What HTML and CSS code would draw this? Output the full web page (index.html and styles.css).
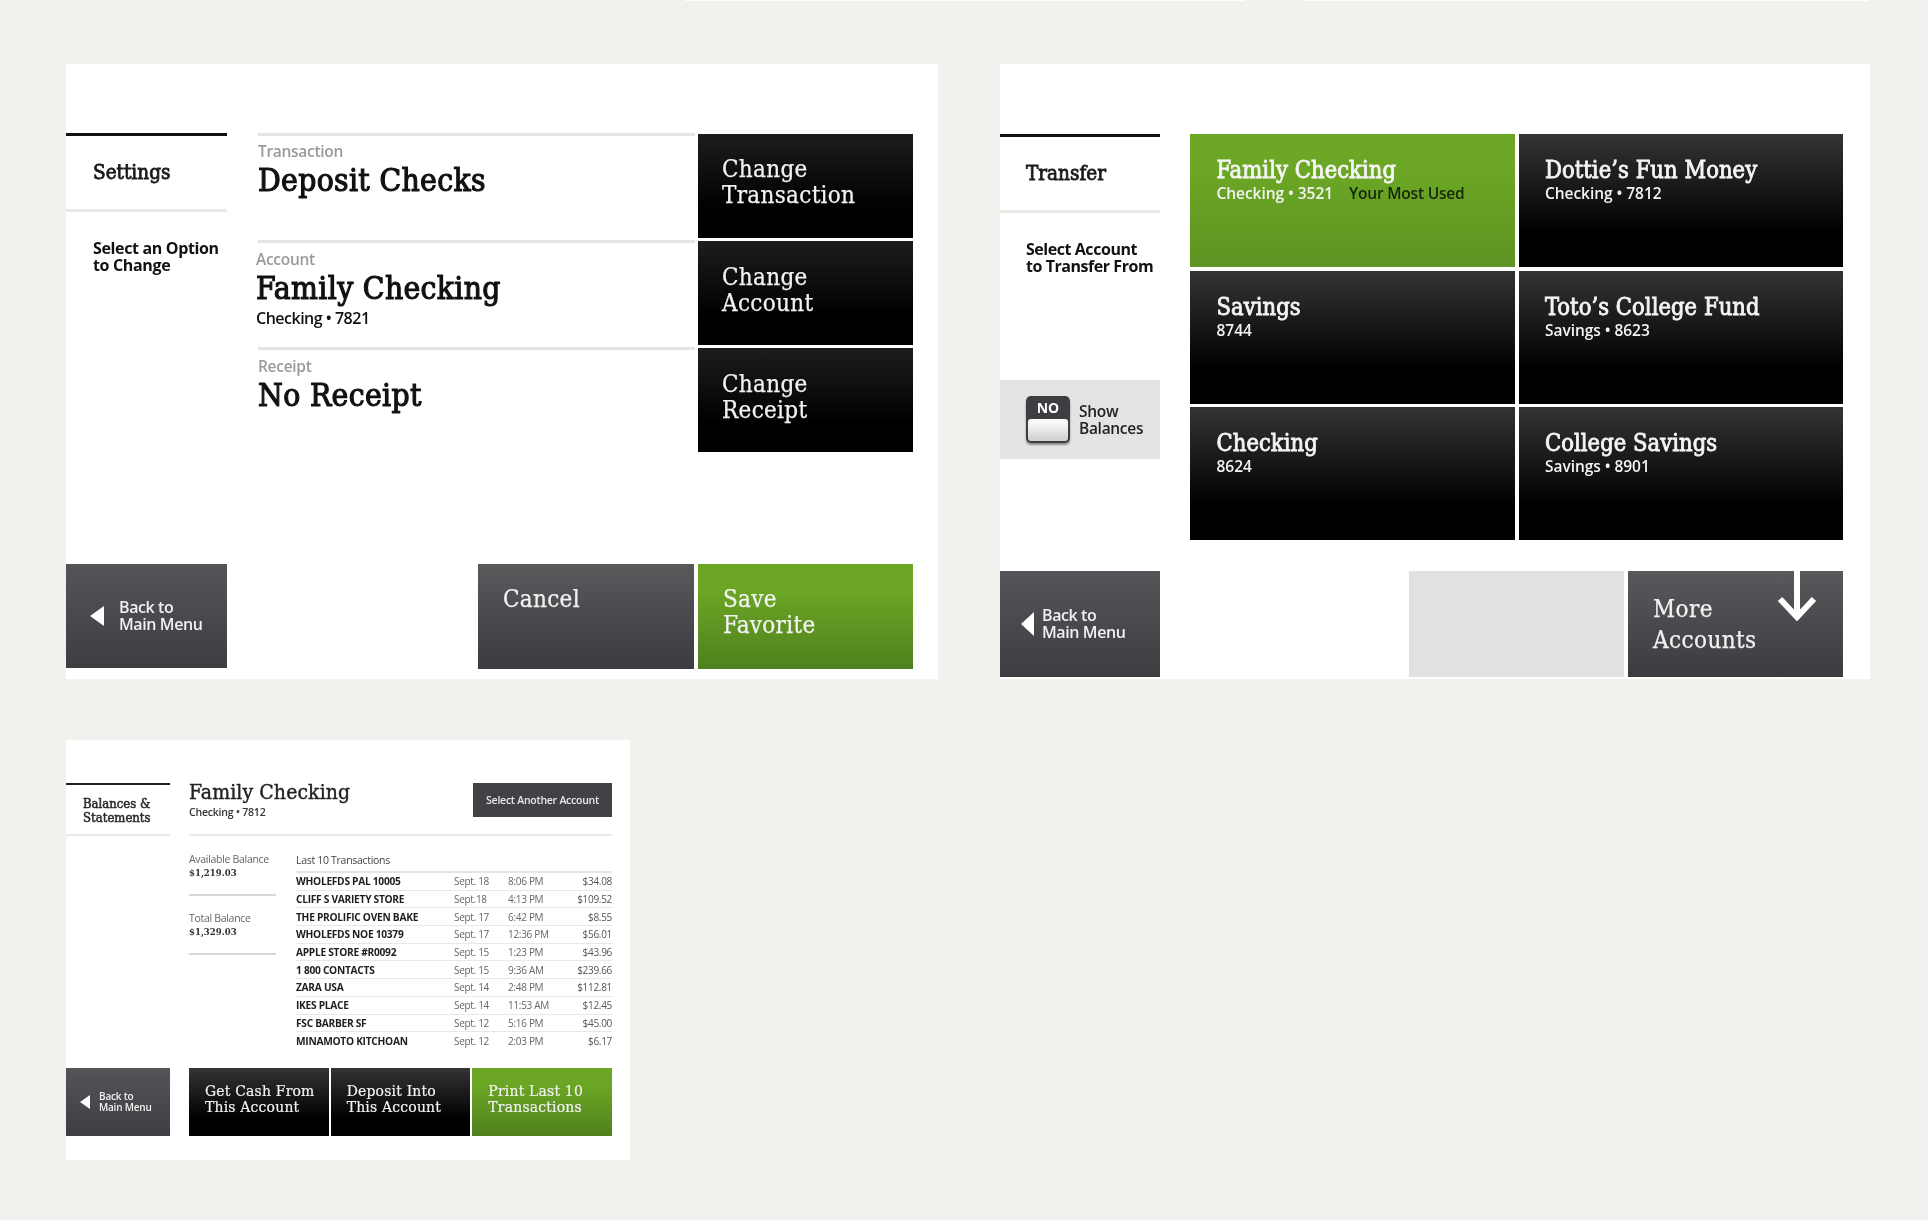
FILE: index.html
```html
<!DOCTYPE html>
<html lang="en">
<head>
<meta charset="utf-8">
<title>ATM screens</title>
<link rel="stylesheet" href="styles.css">
</head>
<body>
<div class="strips"><span class="strip strip-a"></span><span class="strip strip-b"></span></div>
<main class="gallery">
  <section class="panel panel-settings">
    <aside class="side">
      <h2 class="side-title">Settings</h2>
      <p class="side-help">Select an Option<br>to Change</p>
    </aside>
    <div class="summary">
      <div class="summary-row">
        <div class="info"><div class="info-label">Transaction</div><div class="info-value">Deposit Checks</div></div>
        <div class="btn btn-black btn-large">Change<br>Transaction</div>
      </div>
      <div class="summary-row">
        <div class="info info-shift"><div class="info-label">Account</div><div class="info-value">Family Checking</div><div class="info-sub">Checking • 7821</div></div>
        <div class="btn btn-black btn-large">Change<br>Account</div>
      </div>
      <div class="summary-row">
        <div class="info"><div class="info-label">Receipt</div><div class="info-value">No Receipt</div></div>
        <div class="btn btn-black btn-large">Change<br>Receipt</div>
      </div>
    </div>
    <div class="back back-wide">
      <svg class="back-arrow" viewBox="0 0 14 20"><path d="M14 0V20L0 10Z"/></svg>
      <span>Back to<br>Main Menu</span>
    </div>
    <div class="footer-actions">
      <div class="btn btn-gray btn-large btn-cancel">Cancel</div>
      <div class="btn btn-green btn-large">Save<br>Favorite</div>
    </div>
  </section>

  <section class="panel panel-transfer">
    <aside class="side">
      <h2 class="side-title">Transfer</h2>
      <p class="side-help">Select Account<br>to Transfer From</p>
      <div class="toggle-box">
        <div class="toggle"><span class="toggle-no">NO</span><span class="toggle-knob"></span></div>
        <span class="toggle-text">Show<br>Balances</span>
      </div>
    </aside>
    <div class="accounts">
      <div class="account btn-green-flat"><div class="account-name">Family Checking</div><div class="account-sub">Checking • 3521 <b class="most-used">Your Most Used</b></div></div>
      <div class="account btn-dark"><div class="account-name">Dottie’s Fun Money</div><div class="account-sub">Checking • 7812</div></div>
      <div class="account btn-dark"><div class="account-name">Savings</div><div class="account-sub">8744</div></div>
      <div class="account btn-dark"><div class="account-name">Toto’s College Fund</div><div class="account-sub">Savings • 8623</div></div>
      <div class="account btn-dark"><div class="account-name">Checking</div><div class="account-sub">8624</div></div>
      <div class="account btn-dark"><div class="account-name">College Savings</div><div class="account-sub">Savings • 8901</div></div>
    </div>
    <div class="back back-tight">
      <svg class="back-arrow" viewBox="0 0 14 26"><path d="M14 0V26L0 13Z"/></svg>
      <span>Back to<br>Main Menu</span>
    </div>
    <div class="footer-actions footer-more">
      <div class="blank"></div>
      <div class="btn btn-gray btn-more">More<br>Accounts
        <svg class="down-arrow" viewBox="0 0 40 50"><path d="M20 0V46M3 28 20 46 37 28" fill="none" stroke="#fff" stroke-width="6"/></svg>
      </div>
    </div>
  </section>

  <section class="panel panel-balances">
    <aside class="side side-small">
      <h2 class="side-title-small">Balances &amp;<br>Statements</h2>
    </aside>
    <div class="statement">
      <header class="statement-head">
        <div><div class="statement-name">Family Checking</div><div class="statement-sub">Checking • 7812</div></div>
        <div class="select-btn">Select Another Account</div>
      </header>
      <div class="statement-body">
        <div class="balances">
          <div class="balance"><span class="balance-label">Available Balance</span><b>$1,219.03</b></div>
          <div class="balance balance-total"><span class="balance-label">Total Balance</span><b>$1,329.03</b></div>
        </div>
        <div class="transactions">
          <div class="transactions-title">Last 10 Transactions</div>
          <div class="tx"><b>WHOLEFDS PAL 10005</b><span>Sept. 18</span><span>8:06 PM</span><span>$34.08</span></div>
          <div class="tx"><b>CLIFF S VARIETY STORE</b><span>Sept.18</span><span>4:13 PM</span><span>$109.52</span></div>
          <div class="tx"><b>THE PROLIFIC OVEN BAKE</b><span>Sept. 17</span><span>6:42 PM</span><span>$8.55</span></div>
          <div class="tx"><b>WHOLEFDS NOE 10379</b><span>Sept. 17</span><span>12:36 PM</span><span>$56.01</span></div>
          <div class="tx"><b>APPLE STORE #R0092</b><span>Sept. 15</span><span>1:23 PM</span><span>$43.96</span></div>
          <div class="tx"><b>1 800 CONTACTS</b><span>Sept. 15</span><span>9:36 AM</span><span>$239.66</span></div>
          <div class="tx"><b>ZARA USA</b><span>Sept. 14</span><span>2:48 PM</span><span>$112.81</span></div>
          <div class="tx"><b>IKES PLACE</b><span>Sept. 14</span><span>11:53 AM</span><span>$12.45</span></div>
          <div class="tx"><b>FSC BARBER SF</b><span>Sept. 12</span><span>5:16 PM</span><span>$45.00</span></div>
          <div class="tx"><b>MINAMOTO KITCHOAN</b><span>Sept. 12</span><span>2:03 PM</span><span>$6.17</span></div>
        </div>
      </div>
    </div>
    <div class="back back-small">
      <svg class="back-arrow-small" viewBox="0 0 10 14"><path d="M10 0V14L0 7Z"/></svg>
      <span>Back to<br>Main Menu</span>
    </div>
    <div class="small-actions">
      <div class="btn btn-dark btn-small">Get Cash From<br>This Account</div>
      <div class="btn btn-dark btn-small">Deposit Into<br>This Account</div>
      <div class="btn btn-green btn-small">Print Last 10<br>Transactions</div>
    </div>
  </section>
</main>
</body>
</html>
```

FILE: styles.css
```css
* { box-sizing: border-box; }
html, body { margin: 0; padding: 0; }
body {
  width: 1928px;
  height: 1220px;
  overflow: hidden;
  background: #f0f2ed;
  font-family: "Open Sans", "Liberation Sans", sans-serif;
  color: #111;
}
.strips { display: flex; height: 1px; padding-left: 685px; gap: 61px; }
.strip { display: block; height: 1px; background: #fff; }
.strip-a { width: 560px; }
.strip-b { width: 562px; }

.gallery {
  display: grid;
  grid-template-columns: 872px 870px;
  grid-template-rows: 615px 420px;
  column-gap: 62px;
  row-gap: 61px;
  padding: 63px 0 0 66px;
}
.panel { background: #fff; display: grid; filter: blur(.35px); }

.side { display: flex; flex-direction: column; }
.side-title {
  margin: 0;
  height: 79px;
  padding: 24px 0 0 27px;
  border-top: 3px solid #111;
  border-bottom: 3px solid #e9e9e7;
  font: 400 20.5px/24px "DejaVu Serif Condensed", "DejaVu Serif", serif;
  -webkit-text-stroke: .8px #1a1a1a;
  color: #1a1a1a;
}
.side-help {
  margin: 28px 0 0 27px;
  font-size: 16px;
  font-weight: 700;
  line-height: 17px;
  letter-spacing: -.35px;
  color: #111;
}

.btn { color: #f2f2f2; font-family: "DejaVu Serif Condensed", "DejaVu Serif", serif; }
.btn-black { background: linear-gradient(#1d1d1e, #000 72%); }
.btn-dark { background: linear-gradient(#343435, #000 75%); }
.btn-gray { background: linear-gradient(#58595b, #3b3c40); }
.btn-green { background: linear-gradient(#6ba624 25%, #4f801e); }
.btn-green-flat { background: linear-gradient(#6ba624 30%, #5d9322); }
.btn-large {
  font-size: 24px;
  line-height: 26px;
  padding: 22px 0 0 24px;
  letter-spacing: .3px;
  -webkit-text-stroke: .25px #f2f2f2;
}

.panel-settings {
  grid-template-columns: 161px 655px;
  grid-template-rows: 431px 105px;
  column-gap: 31px;
  padding-top: 69px;
}
.summary { display: flex; flex-direction: column; gap: 3px; padding-top: 1px; }
.summary-row { display: flex; gap: 3px; height: 104px; }
.summary-row .btn { width: 215px; flex: none; }
.summary-row + .summary-row .btn { padding-top: 23px; }
.info {
  flex: 1;
  margin-top: -1px;
  border-top: 3px solid #e4e4e3;
  padding-top: 6px;
}
.summary-row + .summary-row .info { padding-top: 7px; }
.info-shift > div { margin-left: -2px; }
.info-label { color: #9a9a9a; font-size: 15.5px; font-weight: 600; line-height: 18px; letter-spacing: -.3px; }
.info-value {
  font: 400 31.5px/38px "DejaVu Serif Condensed", "DejaVu Serif", serif;
  -webkit-text-stroke: 1.1px #111;
  color: #111;
  margin-top: 1px;
  letter-spacing: .35px;
}
.info-sub { font-size: 16px; font-weight: 600; line-height: 22px; letter-spacing: -.5px; }

.back { background: linear-gradient(#545558, #3d3e42); color: #f0f0f0; display: flex; align-items: center; }
.back-wide { font-size: 16px; line-height: 16.5px; gap: 15px; padding-left: 24px; font-weight: 600; letter-spacing: -.4px; height: 104px; }
.back-wide span { margin-top: -1px; }
.back-arrow { width: 14px; height: 20px; fill: #fff; flex: none; }
.footer-actions { display: flex; justify-content: flex-end; gap: 4px; }
.footer-actions .btn { width: 215px; padding-left: 25px; }
.footer-actions .btn-cancel { width: 216px; }
.panel-settings .footer-actions .btn { height: 105px; }

.panel-transfer {
  grid-template-columns: 160px 653px;
  grid-template-rows: 437px 106px;
  column-gap: 30px;
  padding-top: 70px;
}
.panel-transfer .side-title { padding-left: 26px; }
.panel-transfer .side-help { margin: 28px 0 0 26px; letter-spacing: -.45px; }
.toggle-box {
  margin-top: 105px;
  height: 79px;
  background: #e3e4e3;
  display: flex;
  align-items: center;
  gap: 9px;
  padding-left: 26px;
}
.toggle {
  width: 44px;
  height: 47px;
  border-radius: 5px;
  background: #3d3e42;
  box-shadow: 0 2px 2px #8a8a8a;
  display: flex;
  flex-direction: column;
  align-items: center;
  padding: 3px 2px 2px;
}
.toggle-no { color: #fff; font-size: 14px; font-weight: 700; line-height: 18px; }
.toggle-knob { width: 40px; flex: 1; margin-top: 2px; border-radius: 3px; background: linear-gradient(#fff, #cfcfcf); }
.toggle-text { font-size: 15.5px; line-height: 17px; font-weight: 600; letter-spacing: -.3px; color: #222; }

.accounts {
  display: grid;
  grid-template-columns: 325px 324.5px;
  grid-template-rows: repeat(3, 133px);
  column-gap: 3.5px;
  row-gap: 3.5px;
  align-content: start;
}
.account { padding: 22px 0 0 26.5px; color: #f4f4f4; }
.account-name {
  font: 400 23.5px/28px "DejaVu Serif Condensed", "DejaVu Serif", serif;
  -webkit-text-stroke: .8px #f4f4f4;
  letter-spacing: .05px;
}
.account-sub { font-size: 15.5px; font-weight: 600; line-height: 20px; letter-spacing: -.05px; margin-top: -1px; }
.most-used { color: #15260a; margin-left: 12px; font-weight: 600; letter-spacing: -.2px; }

.back-tight { font-size: 16px; line-height: 17px; gap: 8px; padding-left: 21px; font-weight: 600; letter-spacing: -.4px; height: 106px; }
.back-tight .back-arrow { width: 13px; height: 26px; }
.footer-more { gap: 4px; }
.blank { width: 215px; height: 106px; background: #e0e2e1; }
.btn-more {
  position: relative;
  height: 106px;
  font-size: 24px;
  line-height: 31px;
  padding: 23px 0 0 26px;
  letter-spacing: .4px;
  -webkit-text-stroke: .25px #f2f2f2;
}
.down-arrow { position: absolute; top: 0; right: 26px; width: 40px; height: 50px; }

.panel-balances {
  width: 564px;
  grid-template-columns: 104px 423px;
  grid-template-rows: 285px 68px;
  column-gap: 19px;
  padding-top: 43px;
  filter: blur(.5px);
}
.side-small { display: block; }
.side-title-small {
  margin: 0;
  height: 53px;
  padding: 12px 0 0 17px;
  border-top: 2px solid #222;
  border-bottom: 2px solid #eaeaea;
  font: 400 13px/14px "DejaVu Serif Condensed", "DejaVu Serif", serif;
  -webkit-text-stroke: .5px #2a2a2a;
  color: #2a2a2a;
}
.statement { display: flex; flex-direction: column; }
.statement-head {
  height: 53px;
  border-bottom: 2px solid #eaeaea;
  display: flex;
  justify-content: space-between;
  align-items: flex-start;
}
.statement-name { font: 400 21px/24px "DejaVu Serif Condensed", "DejaVu Serif", serif; -webkit-text-stroke: .4px #222; color: #222; margin-top: -3px; letter-spacing: .1px; }
.statement-sub { font-size: 10.5px; font-weight: 600; line-height: 15px; letter-spacing: -.2px; color: #333; margin-top: 1px; }
.select-btn {
  width: 139px;
  height: 34px;
  background: #414246;
  color: #e8e8e8;
  font-size: 10.5px;
  font-weight: 600;
  line-height: 34px;
  text-align: center;
  letter-spacing: -.25px;
}
.statement-body { display: flex; gap: 20px; padding-top: 16px; }
.balances { width: 87px; flex: none; }
.balance {
  height: 44px;
  border-bottom: 2px solid #d8d8d8;
  display: flex;
  flex-direction: column;
  font-size: 10.5px;
  line-height: 14px;
  letter-spacing: -.3px;
  color: #333;
}
.balance-total { height: 59px; padding-top: 15px; }
.balance b { font-family: "DejaVu Serif Condensed", "DejaVu Serif", serif; font-size: 9.5px; color: #333; letter-spacing: 0; }
.balance-label { color: #666; }
.transactions { flex: 1; }
.transactions-title { font-size: 10.5px; line-height: 17px; height: 21px; letter-spacing: -.3px; color: #444; border-bottom: 2px solid #e4e4e4; }
.tx {
  display: grid;
  grid-template-columns: 158px 54px 60px 1fr;
  height: 17.7px;
  align-items: center;
  border-bottom: 1px solid #e8e8e8;
  font-size: 10px;
  line-height: 16px;
  letter-spacing: -.3px;
  color: #666;
}
.tx:last-child { border-bottom: 0; }
.tx b { color: #1e1e1e; font-weight: 700; font-size: 10.2px; letter-spacing: -.28px; white-space: nowrap; }
.tx span:last-child { text-align: right; color: #555; }

.back-small { font-size: 10px; line-height: 11px; gap: 9px; padding-left: 14px; height: 68px; font-weight: 600; letter-spacing: -.2px; }
.back-arrow-small { width: 10px; height: 14px; fill: #fff; flex: none; }
.small-actions { display: flex; gap: 2px; }
.btn-small {
  width: 140px;
  height: 68px;
  font-size: 15.5px;
  line-height: 16px;
  padding: 15px 0 0 16px;
  letter-spacing: .2px;
  -webkit-text-stroke: .2px #f2f2f2;
}
```
